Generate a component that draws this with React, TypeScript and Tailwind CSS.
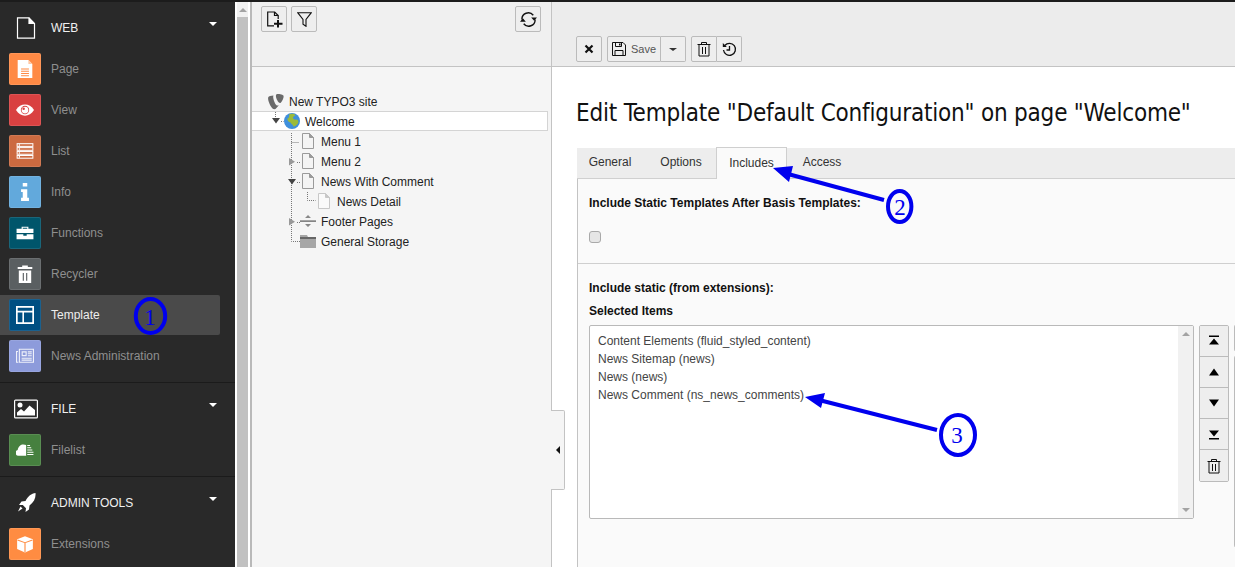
import type { ReactNode } from 'react';

const sans = 'font-["Liberation_Sans",Arial,sans-serif]';

function Tile({ color, children }: { color: string; children: ReactNode }) {
  return (
    <span className="flex h-8 w-8 shrink-0 items-center justify-center rounded-[2px] border border-white/10" style={{ backgroundColor: color }}>
      <svg width="18" height="18" viewBox="0 0 16 16" fill="#fff">{children}</svg>
    </span>
  );
}

function Caret() {
  return <span className="ml-auto mr-[18px] mb-2 h-0 w-0 border-x-[4.5px] border-t-[4px] border-x-transparent border-t-white" />;
}

function GroupHeader({ icon, label }: { icon: ReactNode; label: string }) {
  return (
    <div className="flex h-10 items-center">
      <span className="flex w-[51px] shrink-0 justify-center">{icon}</span>
      <span className="text-xs text-[#f0f0f0]">{label}</span>
      <Caret />
    </div>
  );
}

function ModuleRow({ tile, label, active }: { tile: ReactNode; label: string; active?: boolean }) {
  return (
    <div className={active ? 'flex h-10 w-[220px] items-center gap-2.5 rounded-r-[2px] bg-[#4a4a4a] pl-[9px] text-xs text-[#eeeeee]' : 'flex h-10 items-center gap-2.5 pl-[9px] text-xs text-[#8f8f8f]'}>
      {tile}
      <span>{label}</span>
    </div>
  );
}

function Sidebar() {
  return (
    <aside className="flex w-[235px] shrink-0 flex-col bg-[#292929] pt-1.5">
      <div className="flex flex-col gap-px pb-1.5">
        <GroupHeader
          label="WEB"
          icon={
            <svg width="20" height="22" viewBox="0 0 20 22" fill="none" stroke="#fff" strokeWidth="1.2">
              <path d="M1.500.800h11.500l5.500 5.700v14.700h-17z" />
              <path d="M13 .800v5.700h5.500" fill="#fff" />
            </svg>
          }
        />
        <ModuleRow
          label="Page"
          tile={
            <Tile color="#ff8a45">
              <path d="M1.500 0h9.500l3.500 3.500V16h-13z" />
              <path d="M11 0l3.500 3.500H11z" fill="#ffc7a3" />
              <path d="M4.500 7.500h7v1h-7zM4.500 9.500h7v1h-7zM4.500 11.500h7v1h-7zM4.500 13.500h7v1h-7z" fill="#ff8a45" />
            </Tile>
          }
        />
        <ModuleRow
          label="View"
          tile={
            <Tile color="#d94141">
              <path d="M0 8c2-3.500 5-5 8-5s6 1.500 8 5c-2 3.500-5 5-8 5s-6-1.500-8-5z" />
              <circle cx="8" cy="8" r="3.700" fill="#d94141" />
              <circle cx="8" cy="8" r="3" />
              <circle cx="6.800" cy="6.800" r="1.100" fill="#d94141" />
            </Tile>
          }
        />
        <ModuleRow
          label="List"
          tile={
            <Tile color="#cc6a40">
              <g fill="none" stroke="#fff" strokeWidth=".9">
                <rect x="1" y="1.500" width="14" height="2.400" />
                <rect x="1" y="5" width="14" height="2.400" />
                <rect x="1" y="8.500" width="14" height="2.400" />
                <rect x="1" y="12" width="14" height="2.400" />
              </g>
              <path d="M2.500 2h1v1.400h-1zM2.500 5.500h1v1.400h-1zM2.500 9h1v1.400h-1zM2.500 12.500h1v1.400h-1z" />
            </Tile>
          }
        />
        <ModuleRow
          label="Info"
          tile={
            <Tile color="#62a9dc">
              <path d="M6 0h4v3.200H6zM4.500 5.500H10v7.500h1.500v3h-7v-3H6V8H4.500z" />
            </Tile>
          }
        />
        <ModuleRow
          label="Functions"
          tile={
            <Tile color="#00556b">
              <path d="M5 4.200V2.500h6v1.700h4.500v3.800H.500V4.200zm1 0h4v-.800H6zM.500 9h6v1.500h3V9h6v4.500H.500z" />
            </Tile>
          }
        />
        <ModuleRow
          label="Recycler"
          tile={
            <Tile color="#5a5f61">
              <path d="M1.500 1.800h4V.500h5v1.300h4v1.800h-13zM2.500 4.800h11V16h-11z" />
              <path d="M6 7h1v7H6zM9 7h1v7H9z" fill="#5a5f61" />
            </Tile>
          }
        />
        <ModuleRow
          active
          label="Template"
          tile={
            <Tile color="#004f82">
              <path fillRule="evenodd" d="M0 0h16v16H0zM1.500 1.500v2.800h13V1.500zM1.500 5.700v8.800h4.200V5.700zM7.100 5.700v8.800h7.400V5.700z" />
            </Tile>
          }
        />
        <ModuleRow
          label="News Administration"
          tile={
            <Tile color="#8d9bdb">
              <path fillRule="evenodd" d="M2.500 1.500H16v12.500H2.500zM3.500 2.500v10.500h11.500V2.500zM5 3.800h4.500v4.400H5zM6 4.800v2.400h2.500V4.800zM10.500 3.800H14v1h-3.500zM10.500 5.500H14v1h-3.500zM10.500 7.300H14v1h-3.500zM5 9.500h9v1H5zM5 11.200h9v1H5zM0 3.500h1.800v1H1v8.500h1v1H0z" opacity=".85" />
            </Tile>
          }
        />
      </div>
      <div className="flex flex-col gap-px border-t border-[#1b1b1b] pb-1.5 pt-1.5">
        <GroupHeader
          label="FILE"
          icon={
            <svg width="24" height="20" viewBox="0 0 24 20" fill="#fff">
              <path fillRule="evenodd" d="M1.500.500h21A1.500 1.500 0 0 1 24 2v16a1.500 1.500 0 0 1-1.500 1.500h-21A1.500 1.500 0 0 1 0 18V2A1.500 1.500 0 0 1 1.500.500zM1.200 1.700v16.600h21.600V1.700z" />
              <circle cx="6" cy="6" r="2.500" />
              <path d="M3 16.500v-3l4-3.500 3 2.500 5.500-6 5.500 4.500v5.500z" />
            </svg>
          }
        />
        <ModuleRow
          label="Filelist"
          tile={
            <Tile color="#46803f">
              <path d="M2.300 13a2.600 2.600 0 0 1-.8-5.100C2 4.800 4.200 3 6.500 3c1 0 1.800.200 2.500.600V13z" />
              <path d="M10 3.500h2.500v1H10zM10 5.500h3.500v1H10zM10 7.500h4.500v1H10zM10 9.500h5.500v1H10zM10 11.500h5.500v1H10z" />
            </Tile>
          }
        />
      </div>
      <div className="flex flex-col gap-px border-t border-[#1b1b1b] pt-1.5">
        <GroupHeader
          label="ADMIN TOOLS"
          icon={
            <svg width="22" height="22" viewBox="0 0 22 22" fill="#fff">
              <path d="M20.500 1c.500 5-1.500 9-6 12.500l-.500 4-3.500 2.500.500-3.800-3.200-3.200L4 13l2.500-3.500 4-.500C13 4 16.500 1.500 20.500 1z" />
              <path d="M5.500 14.500l2 2-4.500 3z" />
            </svg>
          }
        />
        <ModuleRow
          label="Extensions"
          tile={
            <Tile color="#ff8c42">
              <path d="M8 1l7 2.700v8.800L8 15.500l-7-3V3.700z" />
              <path d="M1.500 4L8 6.500 14.500 4l.300.800L8.500 7.200v8h-1V7.200L1.200 4.800z" fill="#ff8c42" />
            </Tile>
          }
        />
      </div>
    </aside>
  );
}

function Scrollbar() {
  return (
    <div className="flex w-[17px] shrink-0 flex-col border-r-2 border-[#b9b9b9] bg-white pl-0.5 pr-0.5">
      <div className="flex h-[15px] justify-center bg-[#f1f1f1] pt-1.5">
        <span className="h-0 w-0 border-x-[4px] border-b-[4px] border-x-transparent border-b-[#a3a3a3]" />
      </div>
      <div className="flex-1 bg-[#c1c1c1]" />
    </div>
  );
}

function ToolButton({ children, className = 'rounded-[2px] border border-[#bbbbbb]' }: { children: ReactNode; className?: string }) {
  return <span className={`flex h-[26px] items-center justify-center bg-[#eeeeee] ${className}`}>{children}</span>;
}

function PageIcon({ faded }: { faded?: boolean }) {
  return (
    <svg width="12" height="16" viewBox="0 0 12 16" fill={faded ? '#fafafa' : '#f4f4f4'} stroke={faded ? '#c8c8c8' : '#9a9a9a'}>
      <path d="M.500.500h7l4 4v11h-11z" />
      <path d="M7.500.500v4h4z" fill={faded ? '#c8c8c8' : '#9a9a9a'} />
    </svg>
  );
}

function TreeRow({ indent, icon, label, selected }: { indent: string; icon: ReactNode; label: string; selected?: boolean }) {
  return (
    <div className={selected ? 'flex h-5 items-center border border-l-0 border-[#d4d4d4] bg-white' : 'flex h-5 items-center'}>
      <div className={`flex items-center ${indent}`}>
        <span className="mr-[1px] flex w-4 shrink-0 justify-center">{icon}</span>
        <span className="ml-1 mt-0.5 text-xs text-[#222222]">{label}</span>
      </div>
    </div>
  );
}

function Tree() {
  return (
    <div className="relative flex-1 bg-[#f5f5f5] pt-6">
      <div className="pr-[3px]">
        <TreeRow
          indent="pl-[16px]"
          label="New TYPO3 site"
          icon={
            <svg width="17" height="17" viewBox="0 0 17 17" fill="#6a6a6a">
              <path d="M11.500 12.500c-.800.300-1.200.300-1.700.300-2 0-4.300-6.500-4.300-9 0-.800.200-1.300.400-1.600C3 2.500.800 3 .300 4c-.200.300-.200.700-.200 1.200 0 3.400 3.700 11.600 6.800 11.600 1.300 0 3.300-2.700 4.600-4.300z" />
              <path d="M9.800.500c2.700 0 6.800.600 6.800 2.300 0 3.200-2.800 7.300-3.800 7.300-1.900 0-4.400-5.200-4.400-7.500 0-1.300.500-2.100 1.400-2.100z" />
            </svg>
          }
        />
        <TreeRow
          selected
          indent="pl-[32px]"
          label="Welcome"
          icon={
            <svg width="16" height="16" viewBox="0 0 16 16">
              <circle cx="8" cy="8" r="8" fill="#3f8fdc" />
              <path d="M5 1.500c2-1 5-1 6.500.500-1 1.500-2 1-2.500 2.500S11 7 13 6.500c1.500 1 2 2.500.500 4.500-1.500 1.500-3 3-4 2.500C9 11.500 7 11 6.500 9.500 4.500 9 3 7 3.500 5.500 5 5 5.500 3 5 1.500z" fill="#9bbb3a" />
            </svg>
          }
        />
        <TreeRow indent="pl-[48px]" label="Menu 1" icon={<PageIcon />} />
        <TreeRow indent="pl-[48px]" label="Menu 2" icon={<PageIcon />} />
        <TreeRow indent="pl-[48px]" label="News With Comment" icon={<PageIcon />} />
        <TreeRow indent="pl-[64px]" label="News Detail" icon={<PageIcon faded />} />
        <TreeRow
          indent="pl-[48px]"
          label="Footer Pages"
          icon={
            <svg width="16" height="16" viewBox="0 0 16 16" fill="#888">
              <path d="M0 7.500h16v1.200H0z" fill="#555" />
              <path d="M8 2l3 3H5zM8 14l-3-3h6z" />
            </svg>
          }
        />
        <TreeRow
          indent="pl-[48px]"
          label="General Storage"
          icon={
            <svg width="16" height="13" viewBox="0 0 16 13" fill="#a6a6a6">
              <path d="M0 0h7l1 2h8v11H0z" />
              <path d="M0 2h16v2H0z" fill="#666" />
            </svg>
          }
        />
      </div>
      {/* connectors and twisties sit over the rows */}
      <svg className="absolute left-0 top-0 h-full w-full" fill="none">
        <path d="M23.500 45v5M29 54.500h2.500M39.500 66v108.500h9M39.500 75.500h8M45 95.500h3M45 115.500h3M45 155.500h3M55.500 125v8.500h8" stroke="#777" strokeDasharray="1 1" />
        <path d="M20 51h8l-4 5.500z" fill="#444" />
        <path d="M37 91v7.500l6-3.700z" fill="#999" />
        <path d="M36 112h8l-4 5.500z" fill="#444" />
        <path d="M37 151v7.500l6-3.700z" fill="#999" />
      </svg>
    </div>
  );
}

function TreePanel() {
  return (
    <section className="flex w-[300px] shrink-0 flex-col border-r border-[#c3c3c3]">
      <div className="flex h-[65px] shrink-0 items-start justify-between border-b border-[#c3c3c3] bg-[#f0f0f0] pl-[9px] pr-[10px] pt-1">
        <div className="flex gap-[4px]">
          <ToolButton className="w-[26px] rounded-[2px] border border-[#bbbbbb]">
            <svg width="17" height="17" viewBox="0 0 17 17" fill="none" stroke="#111" strokeWidth="1.200">
              <path d="M8 14.800H1.700V1h7l3.500 3.500V8" />
              <path d="M8.500 1v3.500h3.700" />
              <path d="M12 9v7.500M8 12.700h8.500" strokeWidth="2" />
            </svg>
          </ToolButton>
          <ToolButton className="w-[26px] rounded-[2px] border border-[#bbbbbb]">
            <svg width="15" height="15" viewBox="0 0 15 15" fill="none" stroke="#111" strokeWidth="1.100">
              <path d="M.700.700h13.600L9 7.500v6.800L6 12.300V7.500z" />
            </svg>
          </ToolButton>
        </div>
        <ToolButton className="w-[26px] rounded-[2px] border border-[#bbbbbb]">
          <svg width="17" height="17" viewBox="0 0 16 16" fill="none" stroke="#111" strokeWidth="1.300">
            <path d="M1.800 8a6 6 0 0 1 10.700-4M14.200 8a6 6 0 0 1-10.700 4" />
            <path d="M10.500 6h5.500l-2.700 3.200zM5.500 10H0l2.700-3.200z" fill="#111" stroke="none" />
          </svg>
        </ToolButton>
      </div>
      <Tree />
    </section>
  );
}

function TrashIcon({ size = 16 }: { size?: number }) {
  return (
    <svg width={size} height={size} viewBox="0 0 16 16" fill="none" stroke="#111">
      <path d="M1.500 3.500h13M5.500 3.500v-2h5v2M3 3.500v11.500h10V3.500M6.500 6v7M9.500 6v7" />
    </svg>
  );
}

function DocHeader() {
  return (
    <div className="flex h-[65px] shrink-0 items-end gap-[5px] border-b border-[#c3c3c3] bg-[#ececec] pb-[4px] pl-6">
      <ToolButton className="w-[26px] rounded-[2px] border border-[#bbbbbb]">
        <svg width="10" height="10" viewBox="0 0 10 10" stroke="#111" strokeWidth="2.200">
          <path d="M1.500 1.500l7 7M8.500 1.500l-7 7" />
        </svg>
      </ToolButton>
      <div className="flex">
        <ToolButton className="w-[54px] gap-[5px] rounded-l-[2px] border border-[#bbbbbb]">
          <svg width="14" height="14" viewBox="0 0 14 14" fill="none" stroke="#111">
            <path d="M.500.500h10.500l2.500 2.500v10.500H.500z" />
            <path d="M3.500.500v4h6v-4M3 13.500v-5h8v5" />
            <path d="M7 1.500h1.500v2H7z" fill="#111" stroke="none" />
          </svg>
          <span className="text-[11px] text-[#555555]">Save</span>
        </ToolButton>
        <ToolButton className="w-[25px] rounded-r-[2px] border border-l-0 border-[#bbbbbb]">
          <span className="h-0 w-0 border-x-[4px] border-t-[3.500px] border-x-transparent border-t-[#333333]" />
        </ToolButton>
      </div>
      <div className="flex">
        <ToolButton className="w-[26px] rounded-l-[2px] border border-[#bbbbbb]">
          <TrashIcon />
        </ToolButton>
        <ToolButton className="w-[25px] rounded-r-[2px] border border-l-0 border-[#bbbbbb]">
          <svg width="15" height="15" viewBox="0 0 15 15" fill="none" stroke="#111" strokeWidth="1.300">
            <path d="M2.800 3.500A6 6 0 1 1 1.500 8" />
            <path d="M.800 1v4h4z" fill="#111" stroke="none" />
            <path d="M7.500 4v4H4.500" />
          </svg>
        </ToolButton>
      </div>
    </div>
  );
}

function MoveButton({ children }: { children: ReactNode }) {
  return <div className="flex h-[31px] items-center justify-center border-b border-[#bbbbbb] bg-[#eeeeee] last:border-b-0">{children}</div>;
}

function Tabs() {
  const tabs = ['General', 'Options', 'Includes', 'Access'];
  return (
    <div className="flex h-[31px] items-end border-b border-[#d0d0d0] bg-[#ededed] text-xs text-[#333333]">
      {tabs.map((t) =>
        t === 'Includes' ? (
          <span key={t} className="-mb-px flex h-8 w-[71px] items-center justify-center border border-b-0 border-[#cfcfcf] bg-[#fafafa] pb-0.5">
            {t}
          </span>
        ) : (
          <span key={t} className={t === 'General' ? 'flex h-[30px] w-[69px] items-center justify-center pb-0.5 pr-[3px]' : 'flex h-[30px] w-[70px] items-center justify-center pb-0.5'}>
            {t}
          </span>
        ),
      )}
    </div>
  );
}

function SelectBox() {
  const items = ['Content Elements (fluid_styled_content)', 'News Sitemap (news)', 'News (news)', 'News Comment (ns_news_comments)'];
  return (
    <div className="flex h-[194px] w-[605px] shrink-0 rounded-[2px] border border-[#b9b9b9] bg-white">
      <ul className="flex-1 px-2 py-1.5 text-xs leading-[18px] text-[#444444]">
        {items.map((i) => (
          <li key={i}>{i}</li>
        ))}
      </ul>
      <div className="flex w-[15px] flex-col items-center justify-between bg-[#f1f1f1] py-1.5">
        <span className="h-0 w-0 border-x-[4px] border-b-[4px] border-x-transparent border-b-[#a3a3a3]" />
        <span className="h-0 w-0 border-x-[4px] border-t-[4px] border-x-transparent border-t-[#a3a3a3]" />
      </div>
    </div>
  );
}

function FormPanel() {
  return (
    <div className="border-l border-[#c3c3c3] bg-[#fafafa] pb-8">
      <div className="h-[85px] border-b border-[#cfcfcf] pl-[11px] pt-4">
        <p className="text-xs font-bold text-[#111111]">Include Static Templates After Basis Templates:</p>
        <span className="mt-5 block h-3 w-3 rounded-[3px] border border-[#a9a9a9] bg-[#e6e6e6]" />
      </div>
      <div className="pl-[11px] pt-4">
        <p className="text-xs font-bold text-[#111111]">Include static (from extensions):</p>
        <p className="mt-[7px] text-xs font-bold text-[#111111]">Selected Items</p>
        <div className="mt-1.5 flex items-start gap-[5px]">
          <SelectBox />
          <div className="w-[30px] shrink-0 overflow-hidden rounded-[2px] border border-[#bbbbbb]">
            <MoveButton>
              <svg width="12" height="12" viewBox="0 0 12 12" fill="#000">
                <path d="M1 .500h10v1.500H1zM6 3.500l5 6H1z" />
              </svg>
            </MoveButton>
            <MoveButton>
              <svg width="12" height="8" viewBox="0 0 12 8" fill="#000">
                <path d="M6 .500l5 7H1z" />
              </svg>
            </MoveButton>
            <MoveButton>
              <svg width="12" height="8" viewBox="0 0 12 8" fill="#000">
                <path d="M6 7.500l-5-7h10z" />
              </svg>
            </MoveButton>
            <MoveButton>
              <svg width="12" height="12" viewBox="0 0 12 12" fill="#000">
                <path d="M1 10h10v1.500H1zM6 8.500l-5-6h10z" />
              </svg>
            </MoveButton>
            <MoveButton>
              <TrashIcon />
            </MoveButton>
          </div>
          <div className="flex shrink-0 flex-col gap-[5px]">
            <div className="h-[26px] w-[6px] rounded-l-[2px] border border-r-0 border-[#bbbbbb] bg-[#eeeeee]" />
            <div className="h-[191px] w-[6px] rounded-l-[2px] border border-r-0 border-[#bbbbbb] bg-[#fafafa]" />
          </div>
        </div>
      </div>
    </div>
  );
}

function Annotations() {
  return (
    <svg className="pointer-events-none absolute left-0 top-0" width="1235" height="567" fill="none">
      <g stroke="#0000ee" strokeWidth="4">
        <ellipse cx="150.500" cy="316" rx="14.700" ry="17" />
        <ellipse cx="899.700" cy="206.500" rx="11.700" ry="15.500" />
        <ellipse cx="958" cy="435" rx="17" ry="20" />
        <path d="M884 200L788 174M937 430L819 400" />
      </g>
      <path d="M773 168L793 166L789 182zM805 397L825 393L821 408z" fill="#0000ee" />
      <g fill="#0000ee" fontFamily="Liberation Serif, serif" fontSize="23" textAnchor="middle">
        <text x="150" y="325">1</text>
        <text x="900" y="215">2</text>
        <text x="957" y="443">3</text>
      </g>
    </svg>
  );
}

export default function App() {
  return (
    <div className={`relative flex h-[567px] w-[1235px] flex-col overflow-hidden bg-white ${sans}`}>
      <div className="h-0.5 shrink-0 bg-[#1c1c1c]" />
      <div className="flex min-h-0 flex-1">
        <Sidebar />
        <Scrollbar />
        <TreePanel />
        <main className="relative min-w-0 flex-1">
          <DocHeader />
          <div className="pl-[25px]">
            <h1 className='-ml-px mt-[29px] whitespace-nowrap font-["DejaVu_Sans_Condensed","DejaVu_Sans",sans-serif] text-[24px] leading-[34px] tracking-[-0.2px] text-[#111111]'>
              Edit Template "Default Configuration" on page "Welcome"
            </h1>
            <div className="mt-[18px]">
              <Tabs />
              <FormPanel />
            </div>
          </div>
          <div className="absolute -left-px top-[408px] flex h-20 w-[14px] items-center justify-center rounded-r-[2px] border border-l-0 border-[#c3c3c3] bg-[#f5f5f5]">
            <span className="h-0 w-0 border-y-[4px] border-r-[4px] border-y-transparent border-r-[#111111]" />
          </div>
        </main>
      </div>
      <Annotations />
    </div>
  );
}
